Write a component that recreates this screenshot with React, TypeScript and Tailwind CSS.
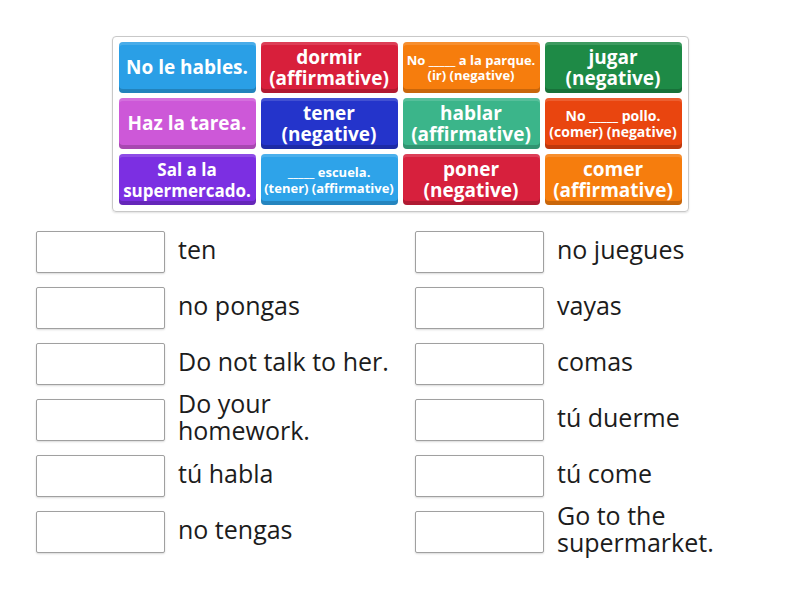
import React from 'react';

type Tile = { lines: string[]; bg: string; text: string };

const big = 'text-[19px] leading-[21px]';

const tiles: Tile[] = [
  { lines: ['No le hables.'], bg: 'bg-[#2a9fe6]', text: big },
  { lines: ['dormir', '(affirmative)'], bg: 'bg-[#d81f3b]', text: big },
  { lines: ['No _____ a la parque.', '(ir) (negative)'], bg: 'bg-[#f67d0d]', text: 'text-[13px] leading-[15px]' },
  { lines: ['jugar', '(negative)'], bg: 'bg-[#1e8a46]', text: big },
  { lines: ['Haz la tarea.'], bg: 'bg-[#cd58d8]', text: big },
  { lines: ['tener', '(negative)'], bg: 'bg-[#2434cb]', text: big },
  { lines: ['hablar', '(affirmative)'], bg: 'bg-[#3bb58a]', text: big },
  { lines: ['No _____ pollo.', '(comer) (negative)'], bg: 'bg-[#e9450f]', text: 'text-[14px] leading-[16px]' },
  { lines: ['Sal a la', 'supermercado.'], bg: 'bg-[#7c2fe2]', text: 'text-[17px] leading-[21px]' },
  { lines: ['_____ escuela.', '(tener) (affirmative)'], bg: 'bg-[#2ea3e9]', text: 'text-[13px] leading-[16px]' },
  { lines: ['poner', '(negative)'], bg: 'bg-[#d7203d]', text: big },
  { lines: ['comer', '(affirmative)'], bg: 'bg-[#f67d0d]', text: big },
];

const answers: string[][] = [
  ['ten'],
  ['no juegues'],
  ['no pongas'],
  ['vayas'],
  ['Do not talk to her.'],
  ['comas'],
  ['Do your', 'homework.'],
  ['tú duerme'],
  ['tú habla'],
  ['tú come'],
  ['no tengas'],
  ['Go to the', 'supermarket.'],
];

const App = () => {
  return (
    <div className="w-[800px] h-[600px] bg-white font-['Open_Sans',sans-serif] pt-[36px]">
      <div className="mx-auto w-[577px] rounded-[4px] border border-[#c8c8c8] shadow-[0_1px_2px_rgba(0,0,0,0.12)] px-[6px] pt-[5px] pb-[6px]">
        <div className="grid grid-cols-4 gap-[5px]">
          {tiles.map((t, i) => (
            <div
              key={i}
              className={`${t.bg} ${t.text} h-[51px] rounded-[4px] flex flex-col items-center justify-center text-white font-bold text-center shadow-[inset_0_-4px_0_rgba(0,0,0,0.18),inset_0_3px_0_rgba(255,255,255,0.14)]`}
            >
              {t.lines.map((l, j) => (
                <span key={j} className="whitespace-nowrap">
                  {l}
                </span>
              ))}
            </div>
          ))}
        </div>
      </div>

      <div className="mt-[19px] pl-[36px] grid grid-cols-[379px_379px] gap-y-[14px]">
        {answers.map((a, i) => (
          <div key={i} className="flex items-center h-[42px]">
            <div className="w-[129px] h-[42px] shrink-0 border border-[#a0a0a0] rounded-[2px] shadow-[0_1px_2px_rgba(0,0,0,0.15)] bg-white" />
            <div className="ml-[13px] pb-[6px] text-[25px] leading-[27px] text-[#1c1c1c] whitespace-nowrap">
              {a.map((l, j) => (
                <div key={j}>{l}</div>
              ))}
            </div>
          </div>
        ))}
      </div>
    </div>
  );
};

export default App;
